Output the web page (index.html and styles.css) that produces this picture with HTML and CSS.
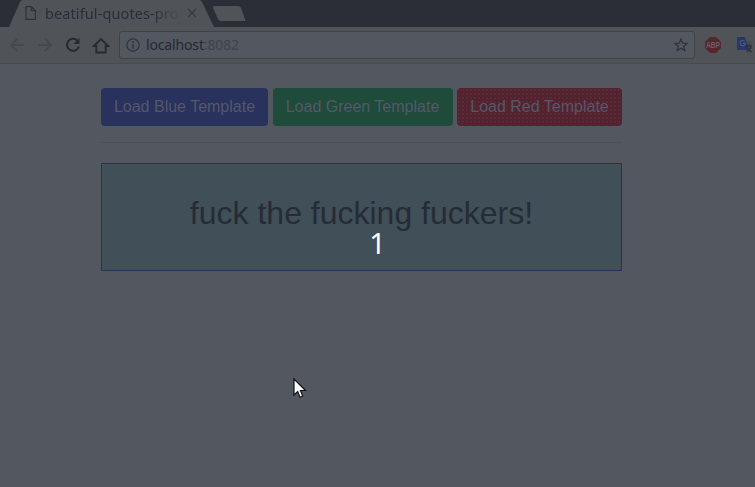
FILE: index.html
```html
<!DOCTYPE html>
<html lang="en">
<head>
<meta charset="utf-8">
<title>beatiful-quotes-project</title>
<link rel="stylesheet" href="styles.css">
</head>
<body>
<header class="tabs">
  <svg class="tab-shape" width="250" height="27" viewBox="0 0 250 27">
    <path d="M9 27 20 2Q21 0 23 0H199Q201 0 202 2L214 27Z" fill="#505459"/>
    <path d="M215 6H238Q240 6 241 8L245.500 21H221Q219 21 218 19L213 8Q212.500 6 215 6Z" fill="#505459"/>
  </svg>
  <div class="tab">
    <svg class="file" width="12" height="14" viewBox="0 0 12 14" fill="none" stroke="#2f333b" stroke-width="1.200"><path d="M1 .7H6.500L10.400 4.600V13.300H1ZM6.500 .7V4.600H10.400"/></svg>
    <span class="tab-title">beatiful-quotes-project</span>
    <svg width="10" height="10" viewBox="0 0 10 10" stroke="#363a42" stroke-width="1.400"><path d="M1 1 9 9M9 1 1 9"/></svg>
  </div>
</header>
<nav class="toolbar">
  <svg class="arrow" width="16" height="16" viewBox="0 0 16 16" fill="none" stroke="#45494c" stroke-width="1.800"><path d="M15 8H2M8 2 2 8 8 14"/></svg>
  <svg class="arrow next" width="16" height="16" viewBox="0 0 16 16" fill="none" stroke="#45494c" stroke-width="1.800"><path d="M1 8H14M8 2 14 8 8 14"/></svg>
  <svg class="reload" width="16" height="16" viewBox="0 0 16 16"><path d="M12.300 3.600A6 6 0 1 0 13.800 9.500" fill="none" stroke="#272b31" stroke-width="2"/><path d="M14.500 1V7H8.500Z" fill="#272b31"/></svg>
  <svg class="home" width="18" height="17" viewBox="0 0 18 17" fill="none" stroke="#272b31" stroke-width="1.900"><path d="M1.800 9 9 2 16.200 9H13.700V15.500H4.300V9Z"/></svg>
  <div class="address">
    <svg width="14" height="14" viewBox="0 0 14 14" fill="none" stroke="#32363d" stroke-width="1.300"><circle cx="7" cy="7" r="6.100"/><path d="M7 6V10.700M7 3.200V4.900" stroke-width="1.700"/></svg>
    <span class="url">localhost<span class="port">:8082</span></span>
    <svg class="star" width="14" height="14" viewBox="0 0 15 15" fill="none" stroke="#30343a" stroke-width="1.400"><path d="M7.500 1 9.300 5.400 14 5.800 10.400 8.900 11.500 13.500 7.500 11 3.500 13.500 4.600 8.900 1 5.800 5.700 5.400Z"/></svg>
  </div>
  <svg class="abp" width="16" height="16" viewBox="0 0 16 16"><path d="M5 0H11L16 5V11L11 16H5L0 11V5Z" fill="#57252c"/><text x="8" y="11" text-anchor="middle" textLength="14" lengthAdjust="spacingAndGlyphs" class="abp-text">ABP</text></svg>
  <svg class="translate" width="16" height="17" viewBox="0 0 16 17"><path d="M7 4H14.500V16H10Z" fill="#484d53"/><path d="M1 0H8L12 13H1Q0 13 0 12V1Q0 0 1 0Z" fill="#29376a"/><path d="M7.700 4.500A2.600 2.600 0 1 0 8.200 6.500H6" fill="none" stroke="#525972" stroke-width="1.200"/><path d="M8.500 9H15M12 7.500V9M14 9Q13 13 9.500 14.500M10 10 14.500 15" fill="none" stroke="#2e3338" stroke-width="1.300"/></svg>
</nav>
<main>
  <div class="buttons">
    <button class="btn blue">Load Blue Template</button>
    <button class="btn green">Load Green Template</button>
    <button class="btn red">Load Red Template</button>
  </div>
  <hr>
  <section class="quote">fuck the fucking fuckers!</section>
</main>
<div class="count">1</div>
<svg class="cursor" width="14" height="21" viewBox="0 0 14 21"><path d="M1 1V17L4.700 13.500 7 19.200 9.700 18 7.400 12.500H12.500Z" fill="#fff" stroke="#101216" stroke-width="1.200"/></svg>
</body>
</html>
```
FILE: styles.css
```css
* { box-sizing: border-box; }
body {
  margin: 0;
  height: 487px;
  overflow: hidden;
  background: #53575f;
  font-family: "Liberation Sans", Arial, sans-serif;
}
svg { display: block; flex: none; }
.tabs { position: relative; height: 27px; background: #2b2e37; }
.tab-shape { position: absolute; left: 0; top: 0; }
.tab {
  position: relative;
  display: flex;
  align-items: center;
  height: 26px;
  padding-left: 25px;
}
.tab-title {
  width: 134px;
  margin: 0 8px 0 8px;
  overflow: hidden;
  white-space: nowrap;
  font: 14.500px/20px "Noto Sans", sans-serif;
  letter-spacing: 0.1px;
  color: #292d39;
  -webkit-mask-image: linear-gradient(to right, #000 108px, transparent 136px);
  mask-image: linear-gradient(to right, #000 108px, transparent 136px);
}
.toolbar {
  display: flex;
  align-items: center;
  height: 37px;
  padding-left: 9px;
  background: #505459;
  border-bottom: 1px solid #474b50;
}
.next { margin-left: 12px; }
.reload { margin-left: 12px; }
.home { margin-left: 11px; }
.address {
  display: flex;
  align-items: center;
  width: 576px;
  height: 28px;
  margin-left: 9px;
  padding: 0 6px;
  border: 1px solid #3e434a;
  border-radius: 3px;
  background: #53575f;
}
.url { margin-left: 6px; font: 14px/20px "Noto Sans", sans-serif; letter-spacing: -0.15px; color: #252932; }
.port { color: #3e444a; }
.star { margin-left: auto; }
.abp { margin-left: 10px; }
.abp-text { font: bold 8.500px "Liberation Sans", sans-serif; fill: #666269; }
.translate { margin-left: 16px; }
main { width: 521px; margin: 24px 0 0 101px; }
.buttons { display: flex; justify-content: space-between; }
.btn {
  height: 38px;
  padding: 0;
  border: 0;
  border-radius: 4px;
  font: 16px/24px "Liberation Sans", Arial, sans-serif;
  color: #53586a;
}
.blue { width: 167px; background: #29325d; }
.green { width: 180px; background: #1f4b3a; }
.red {
  width: 165px;
  background-color: #50232f;
  background-image: radial-gradient(circle, #682a38 0.500px, transparent 1px);
  background-size: 4px 4px;
}
hr { height: 1px; margin: 16px 0 20px; border: 0; background: #4c5056; }
.quote {
  height: 108px;
  padding-top: 30px;
  border: 1px solid #2f2e5b;
  background: #404f58;
  color: #252c35;
  font-size: 32px;
  line-height: 38px;
  text-align: center;
}
.count {
  position: absolute;
  left: 0;
  top: 225px;
  width: 755px;
  color: #fff;
  font: 29px/36px "Noto Sans", sans-serif;
  text-align: center;
}
.cursor { position: absolute; left: 293px; top: 378px; }
```
